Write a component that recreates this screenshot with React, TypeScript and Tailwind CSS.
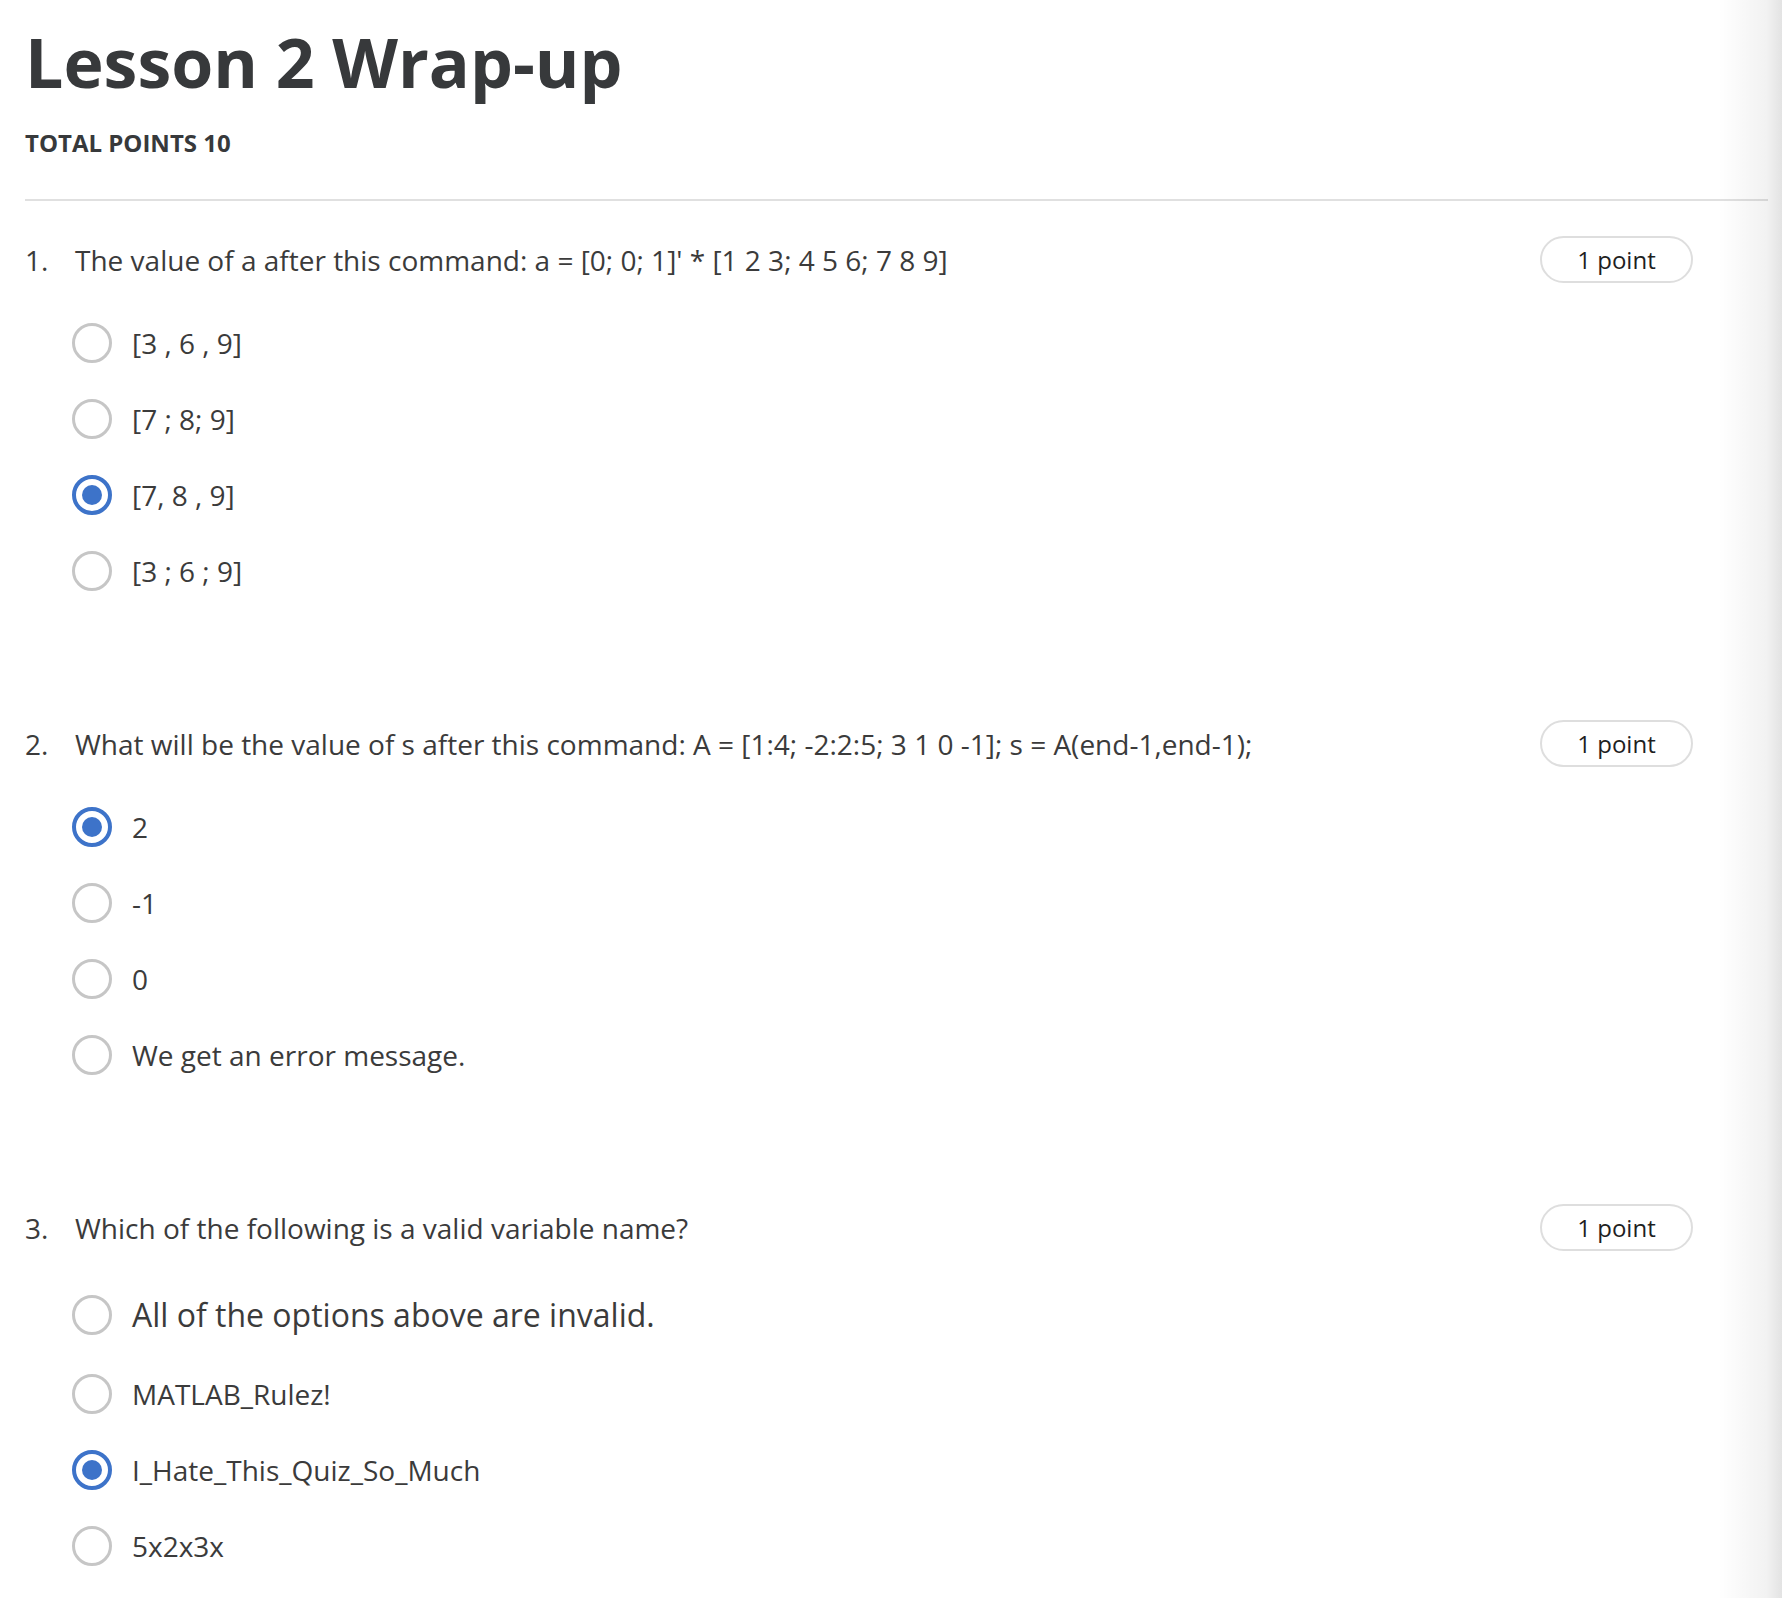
type Option = { label: string; selected?: boolean; large?: boolean };

type Question = { num: number; text: string; options: Option[] };

const questions: Question[] = [
  {
    num: 1,
    text: "The value of a after this command: a = [0; 0; 1]' * [1 2 3; 4 5 6; 7 8 9]",
    options: [
      { label: "[3 , 6 , 9]" },
      { label: "[7 ; 8; 9]" },
      { label: "[7, 8 , 9]", selected: true },
      { label: "[3 ; 6 ; 9]" },
    ],
  },
  {
    num: 2,
    text: "What will be the value of s after this command: A = [1:4; -2:2:5; 3 1 0 -1]; s = A(end-1,end-1);",
    options: [
      { label: "2", selected: true },
      { label: "-1" },
      { label: "0" },
      { label: "We get an error message." },
    ],
  },
  {
    num: 3,
    text: "Which of the following is a valid variable name?",
    options: [
      { label: "All of the options above are invalid.", large: true },
      { label: "MATLAB_Rulez!" },
      { label: "I_Hate_This_Quiz_So_Much", selected: true },
      { label: "5x2x3x" },
    ],
  },
];

function Radio({ selected }: { selected?: boolean }) {
  if (selected) {
    return (
      <span className="flex h-[40px] w-[40px] shrink-0 items-center justify-center rounded-full border-[4px] border-[#3d73c9]">
        <span className="h-[20px] w-[20px] rounded-full bg-[#3d73c9]" />
      </span>
    );
  }
  return <span className="block h-[40px] w-[40px] shrink-0 rounded-full border-[3px] border-[#c6c6c6]" />;
}

function QuestionBlock({ q }: { q: Question }) {
  return (
    <div className="pr-[75px]">
      <div className="flex h-[47px] items-center justify-between">
        <div className="flex items-center text-[28px] text-[#3b3b3b]">
          <span className="w-[50px]">{q.num}.</span>
          <span>{q.text}</span>
        </div>
        <div className="flex h-[47px] w-[153px] items-center justify-center rounded-full border-2 border-[#dedede] text-[24px] text-[#1f1f1f]">
          1 point
        </div>
      </div>
      <div className="ml-[47px] mt-[22px] flex flex-col">
        {q.options.map((o, i) => (
          <div key={i} className={`flex items-center gap-[20px] ${o.large ? "h-[83px]" : "h-[76px]"}`}>
            <Radio selected={o.selected} />
            <span className={`${o.large ? "text-[32px]" : "text-[28px]"} text-[#3b3b3b]`}>{o.label}</span>
          </div>
        ))}
      </div>
    </div>
  );
}

export default function App() {
  return (
    <div className="relative min-h-[1598px] overflow-hidden bg-white font-['Open_Sans',sans-serif]">
      <div className="pl-[25px] pr-[14px] pb-[16px]">
        <h1 className="mt-[28px] text-[68px] font-bold leading-none text-[#37393b]">Lesson 2 Wrap-up</h1>
        <p className="mt-[35px] text-[24px] font-bold leading-none text-[#37393b]">TOTAL POINTS 10</p>
        <div className="mt-[44px] h-[2px] bg-[#e0e0e0]" />
        <div className="mt-[35px] flex flex-col gap-[111px]">
          {questions.map((q) => (
            <QuestionBlock key={q.num} q={q} />
          ))}
        </div>
      </div>
      <div className="pointer-events-none absolute right-0 top-0 h-full w-[64px] bg-[linear-gradient(to_right,rgba(0,0,0,0),rgba(0,0,0,0.05)_75%,rgba(0,0,0,0.11))]" />
    </div>
  );
}
